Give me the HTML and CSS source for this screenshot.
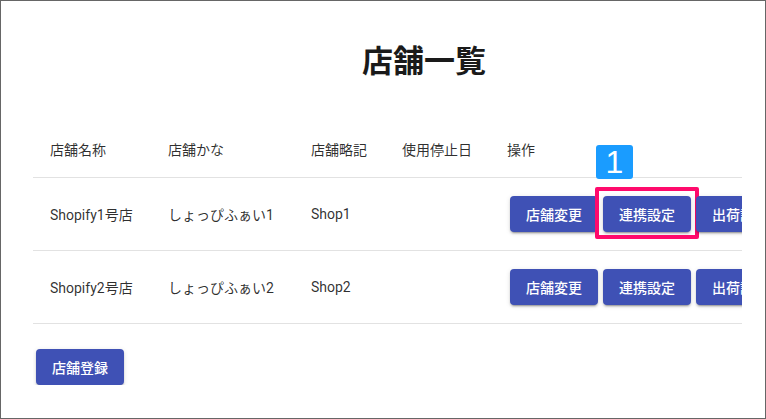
FILE: index.html
```html
<!DOCTYPE html>
<html lang="ja">
<head>
    <meta charset="UTF-8">
    <meta name="viewport" content="width=device-width, initial-scale=1.0">
    <title>店舗一覧</title>
    <link rel="stylesheet" href="styles.css">
</head>
<body>

    <div class="frame">
        <div class="page">
            <h1 class="pageTitle">店舗一覧</h1>

            <div class="shopTable">
                <div class="row headRow">
                    <div class="cell">店舗名称</div>
                    <div class="cell">店舗かな</div>
                    <div class="cell">店舗略記</div>
                    <div class="cell">使用停止日</div>
                    <div class="cell">操作</div>
                </div>
                <div class="row">
                    <div class="cell">Shopify1号店</div>
                    <div class="cell">しょっぴふぁい1</div>
                    <div class="cell">Shop1</div>
                    <div class="cell"></div>
                    <div class="cell actions">
                        <button class="btn">店舗変更</button>
                        <button class="btn marked">連携設定
                            <span class="markBox"></span>
                            <span class="markBadge">1</span>
                        </button>
                        <button class="btn">出荷設定</button>
                        <button class="btn">削除</button>
                    </div>
                </div>
                <div class="row">
                    <div class="cell">Shopify2号店</div>
                    <div class="cell">しょっぴふぁい2</div>
                    <div class="cell">Shop2</div>
                    <div class="cell"></div>
                    <div class="cell actions">
                        <button class="btn">店舗変更</button>
                        <button class="btn">連携設定</button>
                        <button class="btn">出荷設定</button>
                        <button class="btn">削除</button>
                    </div>
                </div>
            </div>

            <div class="footer">
                <button class="btn">店舗登録</button>
            </div>
        </div>
    </div>

</body>
</html>
```

FILE: styles.css
```css
body {
    margin: 0;
    background: #fff;
    font-family: Roboto, "Noto Sans CJK JP", sans-serif;
    color: rgba(0, 0, 0, 0.82);
}
.frame {
    box-sizing: border-box;
    width: 766px;
    height: 419px;
    border: 1px solid #666;
    padding: 0 23px 0 32px;
    overflow: hidden;
}
.page {
    overflow: hidden;
    width: 709px;
}
.pageTitle {
    margin: 42px 0 0;
    padding-left: 73px;
    text-align: center;
    font-size: 31px;
    line-height: 38px;
    font-weight: bold;
    color: #1a1a1a;
}
.shopTable {
    margin-top: 40px;
    width: 900px;
}
.row {
    display: grid;
    grid-template-columns: 135px 143px 91px 105px 1fr;
    align-items: center;
    height: 72px;
    border-bottom: 1px solid #e2e2e2;
    font-size: 14px;
}
.headRow {
    height: 56px;
}
.cell:first-child {
    padding-left: 17px;
}
.actions {
    display: flex;
    gap: 5px;
    padding-left: 3px;
}
.btn {
    position: relative;
    width: 88px;
    height: 36px;
    border: none;
    border-radius: 4px;
    background: #3f51b5;
    color: #fff;
    font-family: Roboto, "Noto Sans CJK JP", sans-serif;
    font-size: 14px;
    font-weight: 500;
    box-shadow: 0 3px 1px -2px rgba(0,0,0,.2), 0 2px 2px 0 rgba(0,0,0,.14), 0 1px 5px 0 rgba(0,0,0,.12);
    flex: none;
}
.markBox {
    position: absolute;
    top: -9px;
    left: -8px;
    width: 96px;
    height: 44px;
    border: 4px solid #ff0a6c;
    border-radius: 2px;
}
.markBadge {
    position: absolute;
    top: -51px;
    left: -7px;
    width: 37px;
    height: 34px;
    background: #1a9cff;
    border-radius: 3px;
    color: #fff;
    font-family: "Liberation Sans", sans-serif;
    font-size: 32px;
    line-height: 34px;
    text-align: center;
}
.footer {
    padding: 25px 0 0 3px;
}
```
